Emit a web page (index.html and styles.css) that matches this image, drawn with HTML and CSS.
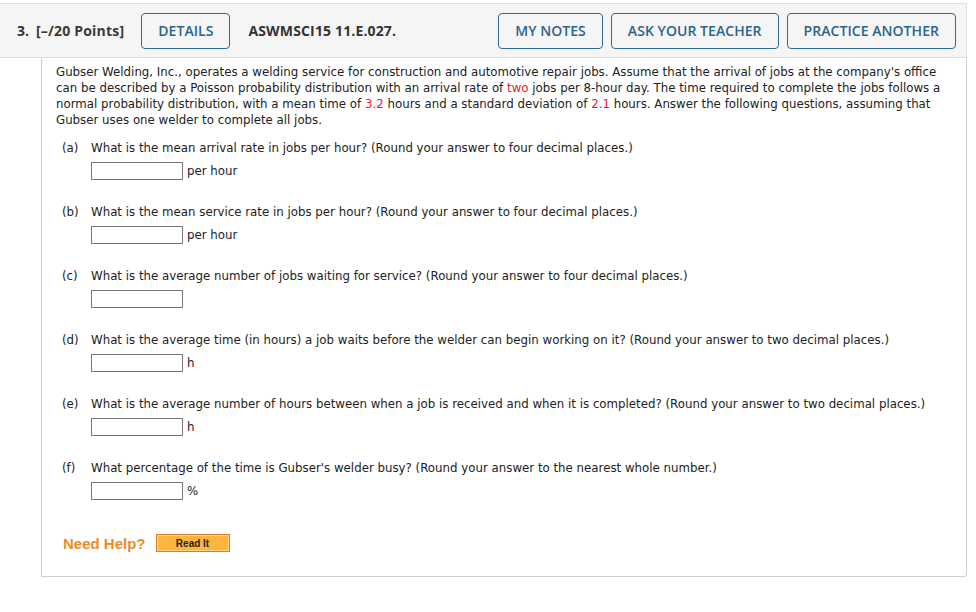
FILE: index.html
```html
<!DOCTYPE html>
<html>
<head>
<meta charset="utf-8">
<link rel="stylesheet" href="styles.css">
</head>
<body>
<div class="header">
  <span class="qnum">3.</span>
  <span class="points">[–/20 Points]</span>
  <button class="btn details">DETAILS</button>
  <span class="code">ASWMSCI15 11.E.027.</span>
  <div class="spacer"></div>
  <button class="btn">MY NOTES</button>
  <button class="btn">ASK YOUR TEACHER</button>
  <button class="btn">PRACTICE ANOTHER</button>
</div>
<div class="content">
  <p class="intro">Gubser Welding, Inc., operates a welding service for construction and automotive repair jobs. Assume that the arrival of jobs at the company's office can be described by a Poisson probability distribution with an arrival rate of <span class="red">two</span> jobs per 8-hour day. The time required to complete the jobs follows a normal probability distribution, with a mean time of <span class="red">3.2</span> hours and a standard deviation of <span class="red">2.1</span> hours. Answer the following questions, assuming that Gubser uses one welder to complete all jobs.</p>
  <div class="part">
    <div class="q"><span class="lbl">(a)</span><span>What is the mean arrival rate in jobs per hour? (Round your answer to four decimal places.)</span></div>
    <div class="ans"><input class="box" type="text"><span class="unit">per hour</span></div>
  </div>
  <div class="part">
    <div class="q"><span class="lbl">(b)</span><span>What is the mean service rate in jobs per hour? (Round your answer to four decimal places.)</span></div>
    <div class="ans"><input class="box" type="text"><span class="unit">per hour</span></div>
  </div>
  <div class="part">
    <div class="q"><span class="lbl">(c)</span><span>What is the average number of jobs waiting for service? (Round your answer to four decimal places.)</span></div>
    <div class="ans"><input class="box" type="text"></div>
  </div>
  <div class="part">
    <div class="q"><span class="lbl">(d)</span><span>What is the average time (in hours) a job waits before the welder can begin working on it? (Round your answer to two decimal places.)</span></div>
    <div class="ans"><input class="box" type="text"><span class="unit">h</span></div>
  </div>
  <div class="part">
    <div class="q"><span class="lbl">(e)</span><span>What is the average number of hours between when a job is received and when it is completed? (Round your answer to two decimal places.)</span></div>
    <div class="ans"><input class="box" type="text"><span class="unit">h</span></div>
  </div>
  <div class="part">
    <div class="q"><span class="lbl">(f)</span><span>What percentage of the time is Gubser's welder busy? (Round your answer to the nearest whole number.)</span></div>
    <div class="ans"><input class="box" type="text"><span class="unit">%</span></div>
  </div>
  <div class="help">
    <span class="needhelp">Need Help?</span>
    <button class="readit">Read It</button>
  </div>
</div>
</body>
</html>
```
FILE: styles.css
```css
html, body {
  margin: 0;
  padding: 0;
  background: #fff;
}
body {
  font-family: "DejaVu Sans", Verdana, sans-serif;
  color: #222;
}
.header {
  margin-top: 3px;
  width: 966px;
  height: 53px;
  box-sizing: content-box;
  border-top: 1px solid #dcdcdc;
  border-right: 1px solid #dcdcdc;
  border-bottom: 1px solid #dcdcdc;
  background: #f5f5f5;
  display: flex;
  align-items: center;
  font-family: "Open Sans", sans-serif;
  font-size: 14px;
}
.qnum {
  font-weight: 700;
  margin-left: 17px;
  color: #333;
}
.points {
  font-weight: 700;
  margin-left: 7px;
  color: #3a3a3a;
  letter-spacing: 0.2px;
}
.code {
  font-weight: 700;
  color: #333;
  margin-left: 18px;
  letter-spacing: 0.15px;
}
.spacer {
  flex: 1;
}
.btn {
  font-family: "Open Sans", sans-serif;
  font-size: 14px;
  font-weight: 600;
  color: #2b6391;
  background: #f5f5f5;
  border: 1px solid #2e6a98;
  border-radius: 4px;
  height: 36px;
  padding: 0 16px;
  margin-right: 8px;
  letter-spacing: 0.05px;
  cursor: pointer;
}
.btn.details {
  margin-left: 17px;
  margin-right: 0;
}
.btn:last-child {
  margin-right: 10px;
}
.content {
  margin-left: 41px;
  width: 924px;
  border-left: 1px solid #cfcfcf;
  border-right: 1px solid #cfcfcf;
  border-bottom: 1px solid #cfcfcf;
  border-bottom-right-radius: 3px;
  padding: 6px 0 24px 0;
  font-size: 11.8px;
}
.intro {
  margin: 0 0 0 14px;
  width: 890px;
  line-height: 16px;
}
.red {
  color: #e8202a;
}
.part {
  margin-left: 20px;
  margin-top: 12px;
  height: 52px;
}
.q {
  display: flex;
  line-height: 16px;
}
.lbl {
  width: 29px;
  flex: none;
}
.ans {
  display: flex;
  align-items: center;
  margin-left: 29px;
  margin-top: 6px;
}
.box {
  width: 92px;
  height: 18px;
  box-sizing: border-box;
  border: 1px solid #777;
  margin: 0;
  padding: 0;
}
.unit {
  margin-left: 4px;
}
.help {
  margin-left: 21px;
  margin-top: 22px;
  display: flex;
  align-items: center;
}
.needhelp {
  font-family: "Liberation Sans", Arial, sans-serif;
  font-weight: 700;
  font-size: 15px;
  color: #f08a1f;
}
.readit {
  margin-left: 10px;
  width: 74px;
  height: 18px;
  padding: 0;
  border: 1px solid #d4822a;
  background: #fbb540;
  box-shadow: inset 0 0 0 1px #ffd27a;
  font-family: "Liberation Sans", Arial, sans-serif;
  font-weight: 700;
  font-size: 10px;
  color: #222;
}
```
